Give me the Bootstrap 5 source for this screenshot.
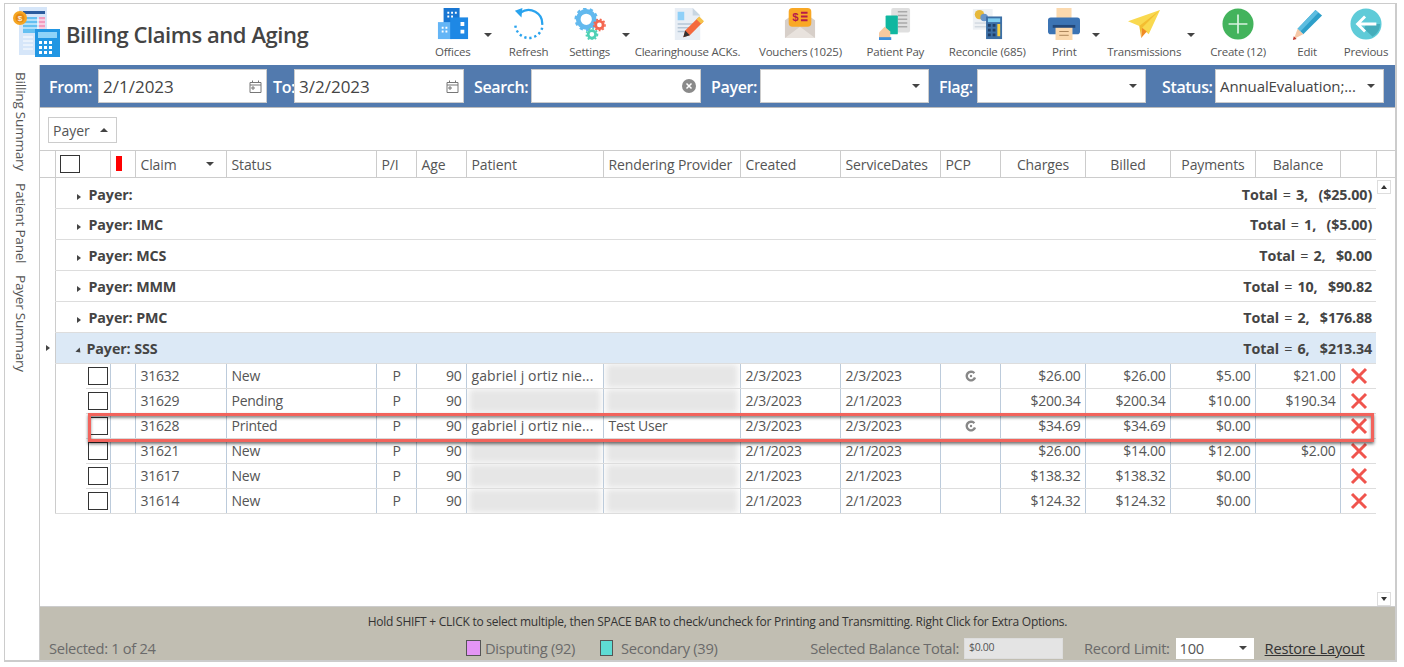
<!DOCTYPE html>
<html lang="en"><head><meta charset="utf-8"><title>Billing Claims and Aging</title>
<link href="https://cdn.jsdelivr.net/npm/bootstrap@5.3.0/dist/css/bootstrap.min.css" rel="stylesheet">
<style>
html,body{height:100%;background:#fff;overflow:hidden}
body{font-family:"Open Sans","Noto Sans",sans-serif;font-size:13.5px;color:#555}
.frame-x{margin:3px 0 0 4px;width:1393px;height:659px;border:1px solid #ccc;border-right-width:2px;border-bottom-width:2px}
.hdr-x{height:61px}
.logo-x{width:61px;padding-left:7px;padding-top:2px}
.ttl-x{font-size:22px;font-weight:600;color:#444;letter-spacing:-.42px;width:362px;padding-bottom:1px}
.tool-x{font-size:11.5px;color:#555;padding-top:4px;white-space:nowrap;letter-spacing:-.22px}
.tool-x svg{display:block;width:32px;height:32px;margin-bottom:3px}
.car-x{padding-top:29px}
.car-x i,.tri-d{display:block;width:0;height:0;border-left:4px solid transparent;border-right:4px solid transparent;border-top:4px solid #444}
.w12{width:12px}.w16{width:16px}.w18{width:18px}.w20{width:20px}
.w46{width:46px}.w50{width:50px}.w58{width:58px}.w60{width:60px}.w62{width:62px}.w76{width:76px}.w78{width:78px}.w108{width:108px}.w112{width:112px}.w114{width:114px}
.side-x{width:35px;border-right:1px solid #ccc;padding-top:7px;gap:12px;align-items:flex-start}
.side-x span{writing-mode:vertical-rl;font-size:13.5px;color:#555;margin-left:6px;white-space:nowrap;letter-spacing:-.2px;line-height:20px}
.main-x{width:1355px}
.filt-x{height:43px;background:#527aae;border-bottom:1px solid #bbb;padding:4px 0 0 9px;color:#fff;font-weight:600;font-size:16px}
.filt-x label{white-space:nowrap;letter-spacing:-.35px;margin-top:6px}
.fld-x{height:34px;width:169px;background:#fff;border:1px solid #ccc;color:#444;font-weight:400;padding:0 4px}
.fld-w{width:170px}
.l-from{width:49px}.l-to{width:21px;margin-left:6px}.l-search{width:57px;margin-left:10px}.l-payer{width:49px;margin-left:10px}.l-flag{width:38px;margin-left:10px}.l-status{width:53px;margin-left:16px}
.fld-x input{border:0;outline:0;padding:1px 0 0;width:100%;font-size:17px;color:#444;background:transparent;letter-spacing:0}
.st-v{font-size:15px;letter-spacing:-.1px}
.grp-x{height:43px;padding:9px 8px 0;border-bottom:1px solid #ccc}
.chip-x{width:69px;height:26px;border:1px solid #ccc;padding:0 5px 0 4px;font-size:14px}
.tri-u{width:0;height:0;border-left:4px solid transparent;border-right:4px solid transparent;border-bottom:4px solid #444;margin-right:3px}
.tbl-x{table-layout:fixed;width:1355px;margin:0;--bs-table-color:#555;--bs-table-border-color:#ddd;border-color:#ddd}
.tbl-x>*>tr>*{padding:0 4px 1px 5px;vertical-align:middle;white-space:nowrap;overflow:hidden;font-weight:400;box-shadow:none;border-width:0;font-size:14px;letter-spacing:-.25px}
.tbl-b{width:1336px}
.thd-x tr{height:26px}
.tbl-x .thd-x th{border-bottom:1px solid #ccc;border-right:1px solid #ccc;padding:1px 4px 0 5px;letter-spacing:-.12px}
.thd-x th.col-r{border-right-width:0!important}
.tbl-x .thd-x th.hd-nb{padding:0}
.tbd-x .gr-x{height:31px}
.tbl-x .tbd-x .gr-x td.g-c{border-bottom:1px solid #ddd;border-left:1px solid #ccc;font-weight:700;color:#444;padding:2px 4px 0 24px;letter-spacing:-.12px;font-size:14.3px}
.tot-x{word-spacing:1.6px}
.tbl-x .tbd-x .gr-f td.g-c{padding-top:4px}
.eq-x{font-weight:400}
.tbl-x .tbd-x .sel-x td.g-c{background:#dce9f6}
.tri-r{display:inline-block;width:0;height:0;border-top:3.5px solid transparent;border-bottom:3.5px solid transparent;border-left:4px solid #444}
.tri-s{display:inline-block;width:0;height:0;border-top:3.5px solid transparent;border-bottom:3.5px solid transparent;border-left:4px solid #444;transform:rotate(45deg);margin:0 6px 0 -3px}
.tri-m{display:block;margin-left:6px}
.g-a{display:inline-block;width:12px;margin-left:-3px}
.tbd-x .dr-x{height:25px}
.dr-x td{border-bottom:1px solid #ddd!important;border-right:1px solid #bccbdb!important}
.dr-x td.m-c{border-bottom-width:0!important;border-right:0!important}
.dr-x td.i-c{border-bottom-width:0!important;border-right:0!important;border-left:1px solid #ccc!important}
.dr-l td.i-c{border-bottom-width:1px!important}
.tbl-x>*>tr>td.c-c{padding:0 0 0 2px}
.tbl-x>*>tr.dr-x>td.l-c{border-right:0!important;padding:0 0 0 2px;text-align:center}
.tbl-x>*>tr>td.nm-x{letter-spacing:.12px;padding-right:0}
.box-x{display:block;width:20px;height:18px;border:1px solid #333;background:#fff}
.hbox-x{width:20px;height:18px;border:1px solid #333;margin-left:4px;display:block}
.flag-x{display:block;width:6px;height:15px;background:#f00;margin-left:5px}
.blur-x{display:block;height:24px;margin:0 -1px;background:#e6e6e6;filter:blur(3px)}
.tbl-x>*>tr>td.td-z{padding:0 3px}
.x-x{width:18px;height:18px;display:inline-block;vertical-align:middle;margin-top:-3px}
.c-x{width:12px;height:12px;display:block;margin:0 auto}
.scr-x{width:19px;padding:2px 4px 0 1px}
.sb-x{width:14px;height:14px;border:1px solid #ddd;background:#fff}
.sb-u{width:0;height:0;border-left:3px solid transparent;border-right:3px solid transparent;border-bottom:4px solid #333}
.sb-d{width:0;height:0;border-left:3px solid transparent;border-right:3px solid transparent;border-top:4px solid #333}
.wrap-x{min-height:0}
.hl-x{position:absolute;left:48px;top:348px;width:1286px;height:29px;border:3px solid #f2635c;box-shadow:0 2px 3px rgba(0,0,0,.55),inset 0 2px 3px rgba(0,0,0,.45);pointer-events:none}
.foot-x{height:54px;background:#c1beb2;padding:0 0 0 9px;border-top:1px solid #ccc}
.hint-x{font-size:12px;color:#333;height:30px;padding:6px 31px 0 0;letter-spacing:-.25px;margin-right:-22px}
.fr2-x{font-size:14.7px;color:#6a6a6a;letter-spacing:-.32px;white-space:nowrap}
.sw-x{width:15px;height:16px;border:1px solid #555;display:block}
.sw-p{background:#e495f5}.sw-t{background:#5edcd4;width:13px}
.sel-t{width:417px}.dis-x{width:134px}.sec-x{width:120px}.bal-x{width:343px}
.inp-x{width:99px;height:21px;background:#e4e4e4;border:1px solid #ddd;font-size:10.5px;padding:0 4px;color:#555}
.slt-x{width:78px;height:21px;background:#fff;padding:0 7px 0 4px;color:#555}
.rest-x{color:#333;margin-left:11px;text-decoration:underline;letter-spacing:-.2px}
.rec-x{margin-left:21px;margin-right:6px}
.bl-t{margin-right:5px;letter-spacing:-.36px}
</style></head>
<body>
<div class="frame-x d-flex flex-column">
 <div class="hdr-x d-flex">
  <div class="logo-x">
   <svg width="48" height="52" viewBox="0 0 48 52"><rect x="7" y="1" width="28" height="48" fill="#d6e6f9"/><rect x="11" y="5" width="22" height="3" fill="#2b5c9e"/><rect x="11" y="11" width="14" height="16" fill="#64c0f2"/><rect x="27" y="11" width="6" height="16" fill="#f29cc0"/><path d="M11 14h22M11 18h22M11 22h22M11 31h10M11 35h10M11 39h10M11 43h10" stroke="#fff"/><circle cx="8" cy="12" r="7" fill="#f5a623"/><circle cx="8" cy="12" r="4.5" fill="#e58a12"/><text x="8" y="15" font-size="8" fill="#fff" text-anchor="middle" font-family="Liberation Sans">$</text><rect x="23" y="23" width="25" height="28" fill="#2196e3"/><rect x="26" y="26" width="19" height="6" fill="#8fd3f8"/><path d="M27 35h3v3h-3zM32 35h3v3h-3zM37 35h3v3h-3zM27 40h3v3h-3zM32 40h3v3h-3zM37 40h3v3h-3zM27 45h3v3h-3zM32 45h3v3h-3zM37 45h3v3h-3z" fill="#fff"/></svg>
  </div>
  <div class="ttl-x d-flex align-items-center">Billing Claims and Aging</div>
  <div class="tool-x w50 d-flex flex-column align-items-center"><svg viewBox="0 0 34 34"><rect x="7" y="0" width="17" height="20" fill="#1976d2"/><rect x="1" y="15" width="15" height="18" fill="#64b5f6"/><rect x="14" y="10" width="19" height="23" fill="#1e88e5"/><path d="M11 4h2v2h-2zM15 4h2v2h-2zM19 4h2v2h-2zM11 8h2v2h-2zM15 8h2v2h-2zM5 20h2v2H5zM9 20h2v2H9zM5 24h2v2H5zM9 24h2v2H9z" fill="#fff"/><path d="M25 15h4v4h-4zM25 23h4v4h-4z" fill="#fff"/></svg>Offices</div>
  <div class="car-x w20 d-flex justify-content-center"><i></i></div>
  <div class="tool-x w62 d-flex flex-column align-items-center"><svg viewBox="0 0 34 34"><path d="M8 5A14.5 14.5 0 0 1 31 18" fill="none" stroke="#29a3ee" stroke-width="2.4"/><path d="M2 3l8-3-1 10z" fill="#29a3ee"/><path d="M31 21A14.5 14.5 0 0 1 2.5 18" fill="none" stroke="#29a3ee" stroke-width="2.6" stroke-dasharray="2.4 3"/></svg>Refresh</div>
  <div class="tool-x w60 d-flex flex-column align-items-center"><svg viewBox="0 0 34 34"><circle cx="13" cy="12" r="8.5" fill="none" stroke="#62b9ee" stroke-width="5"/><circle cx="13" cy="12" r="11" fill="none" stroke="#62b9ee" stroke-width="3" stroke-dasharray="3.5 3.4"/><circle cx="27" cy="18" r="4" fill="none" stroke="#f4664f" stroke-width="3"/><circle cx="27" cy="18" r="6" fill="none" stroke="#f4664f" stroke-width="1.6" stroke-dasharray="2 2"/><circle cx="19" cy="28" r="4" fill="none" stroke="#4fd1b5" stroke-width="3"/><circle cx="19" cy="28" r="6" fill="none" stroke="#4fd1b5" stroke-width="1.6" stroke-dasharray="2 2"/></svg>Settings</div>
  <div class="car-x w12 d-flex justify-content-center"><i></i></div>
  <div class="tool-x w112 d-flex flex-column align-items-center"><svg viewBox="0 0 34 34"><path d="M3 0h19l8 8v26H3z" fill="#e8eef5"/><path d="M22 0l8 8h-8z" fill="#c8d6e2"/><rect x="6" y="4" width="7" height="9" fill="#8fd0f8"/><path d="M6 17h18M6 21h14M6 25h10" stroke="#b5c6d6" stroke-width="1.5"/><path d="M12 31l2-7 14-14 5 5-14 14z" fill="#f4693e"/><path d="M26 12l3-3 5 5-3 3z" fill="#f5c24a"/><path d="M12 31l2-7 5 5z" fill="#333"/></svg>Clearinghouse ACKs.</div>
  <div class="tool-x w114 d-flex flex-column align-items-center"><svg viewBox="0 0 34 34"><path d="M1 13l16-11 16 11v19H1z" fill="#d7cfc9"/><rect x="5" y="0" width="24" height="20" rx="4" fill="#f9a825"/><text x="12" y="14" font-size="12" font-weight="700" fill="#b71c4a" text-anchor="middle" font-family="Liberation Sans">$</text><path d="M18 5h7M18 9h7M18 13h7" stroke="#b71c4a" stroke-width="2"/><path d="M1 32l16-12 16 12z" fill="#e8e2dd"/></svg>Vouchers (1025)</div>
  <div class="tool-x w76 d-flex flex-column align-items-center"><svg viewBox="0 0 34 34"><rect x="13" y="0" width="20" height="26" rx="2" fill="#dfdfdf"/><path d="M20 4h10M20 8h10M20 12h10M20 16h10M20 20h10" stroke="#a9a9a9" stroke-width="1.5"/><rect x="7" y="8" width="13" height="20" rx="1" fill="#10b7a0"/><path d="M0 34v-8l6-6 6 5v9z" fill="#f7c9a0"/><rect x="0" y="31" width="13" height="3" fill="#3d8fdc"/></svg>Patient Pay</div>
  <div class="tool-x w108 d-flex flex-column align-items-center"><svg viewBox="0 0 34 34"><rect x="2" y="1" width="21" height="22" fill="#eef1f4"/><circle cx="9" cy="7" r="5" fill="#e6b93c"/><circle cx="14" cy="10" r="4" fill="#6a95c8"/><path d="M4 16h12M4 20h12" stroke="#c3ccd5"/><rect x="16" y="9" width="17" height="24" fill="#3c6fa5"/><rect x="18" y="11" width="13" height="4" fill="#7fcdf0"/><path d="M18 17h3v3h-3zM23 17h3v3h-3zM18 22h3v3h-3zM23 22h3v3h-3zM18 27h3v3h-3zM23 27h3v3h-3z" fill="#1f3e66"/><rect x="28" y="17" width="3" height="13" fill="#f9d13f"/></svg>Reconcile (685)</div>
  <div class="tool-x w46 d-flex flex-column align-items-center"><svg viewBox="0 0 34 34"><rect x="9" y="0" width="16" height="12" fill="#fbd9ae"/><rect x="0" y="10" width="34" height="18" rx="3" fill="#3c74b4"/><rect x="8" y="20" width="18" height="14" fill="#fbd9ae"/><rect x="5" y="18" width="24" height="3" fill="#22487a"/><path d="M12 25h10M12 29h10" stroke="#a88156"/></svg>Print</div>
  <div class="car-x w18 d-flex justify-content-center"><i></i></div>
  <div class="tool-x w78 d-flex flex-column align-items-center"><svg viewBox="0 0 34 34"><path d="M0 14L34 2 22 28 12 19z" fill="#f9d94f"/><path d="M12 19l22-17-19 19-1 11z" fill="#f3bd31"/><path d="M14 32l1-11 5 4z" fill="#f08a24"/></svg>Transmissions</div>
  <div class="car-x w16 d-flex justify-content-center"><i></i></div>
  <div class="tool-x w78 d-flex flex-column align-items-center"><svg viewBox="0 0 34 34"><circle cx="17" cy="17" r="16.5" fill="#43b35c"/><path d="M17 7v20M7 17h20" stroke="#d9f2df" stroke-width="1.8"/></svg>Create (12)</div>
  <div class="tool-x w60 d-flex flex-column align-items-center"><svg viewBox="0 0 34 34"><path d="M7 22L26 2l7 6-20 20z" fill="#2d9fc9"/><path d="M7 22L26 2l3 3L10 25z" fill="#5dbde0"/><path d="M7 22l6 6-10 5z" fill="#f6c9a8"/><path d="M3 30l-1 4 4-1z" fill="#c0392b"/></svg>Edit</div>
  <div class="tool-x w58 d-flex flex-column align-items-center"><svg viewBox="0 0 34 34"><circle cx="17" cy="17" r="16.5" fill="#5fcbd8"/><path d="M17 17h15a16 16 0 0 1-8 13.5L15 22z" fill="#45adbb"/><path d="M16 9l-8 8 8 8M9 17h19" fill="none" stroke="#fff" stroke-width="3"/></svg>Previous</div>
 </div>
 <div class="d-flex flex-grow-1 wrap-x">
  <div class="side-x d-flex flex-column"><span>Billing Summary</span><span>Patient Panel</span><span>Payer Summary</span></div>
  <div class="main-x d-flex flex-column position-relative">
   <div class="filt-x d-flex">
    <label class="l-from">From:</label>
    <div class="fld-x d-flex align-items-center"><input class="form-control-plaintext" value="2/1/2023" aria-label="From"><svg width="13" height="13" viewBox="0 0 13 13" class="flex-shrink-0"><path d="M1 2.5h11v10H1zM1 5h11M3.500 .5v2M9.500 .5v2M3 7h2v2H3z" fill="none" stroke="#777"/></svg></div>
    <label class="l-to">To:</label>
    <div class="fld-x fld-w d-flex align-items-center"><input class="form-control-plaintext" value="3/2/2023" aria-label="To"><svg width="13" height="13" viewBox="0 0 13 13" class="flex-shrink-0"><path d="M1 2.5h11v10H1zM1 5h11M3.500 .5v2M9.500 .5v2M3 7h2v2H3z" fill="none" stroke="#777"/></svg></div>
    <label class="l-search">Search:</label>
    <div class="fld-x fld-w d-flex align-items-center justify-content-end"><svg width="14" height="14" viewBox="0 0 14 14"><circle cx="7" cy="7" r="7" fill="#8a8a8a"/><path d="M4.500 4.500l5 5M9.500 4.500l-5 5" stroke="#fff" stroke-width="1.500"/></svg></div>
    <label class="l-payer">Payer:</label>
    <div class="fld-x d-flex align-items-center justify-content-end"><span class="tri-d me-1"></span></div>
    <label class="l-flag">Flag:</label>
    <div class="fld-x d-flex align-items-center justify-content-end"><span class="tri-d me-1"></span></div>
    <label class="l-status">Status:</label>
    <div class="fld-x d-flex align-items-center justify-content-between"><span class="st-v">AnnualEvaluation;...</span><span class="tri-d me-1"></span></div>
   </div>
   <div class="grp-x"><div class="chip-x d-flex align-items-center justify-content-between">Payer<span class="tri-u"></span></div></div>
   <table class="table tbl-x"><colgroup><col style="width:15px"><col style="width:31px"><col style="width:24px"><col style="width:25px"><col style="width:91px"><col style="width:150px"><col style="width:40px"><col style="width:50px"><col style="width:137px"><col style="width:137px"><col style="width:100px"><col style="width:100px"><col style="width:60px"><col style="width:85px"><col style="width:85px"><col style="width:85px"><col style="width:85px"><col style="width:36px"><col></colgroup>
    <thead class="thd-x"><tr><th></th><th colspan="2" class="hd-nb"><span class="hbox-x"></span></th><th class="hd-nb"><span class="flag-x"></span></th><th><div class="d-flex justify-content-between align-items-center pe-2">Claim<span class="tri-d"></span></div></th><th>Status</th><th>P/I</th><th>Age</th><th>Patient</th><th>Rendering Provider</th><th>Created</th><th>ServiceDates</th><th>PCP</th><th class="text-center">Charges</th><th class="text-center">Billed</th><th class="text-center">Payments</th><th class="text-center">Balance</th><th></th><th class="col-r"></th></tr></thead>
   </table>
   <div class="d-flex flex-grow-1 wrap-x">
    <div>
    <table class="table tbl-x tbl-b"><colgroup><col style="width:15px"><col style="width:31px"><col style="width:24px"><col style="width:25px"><col style="width:91px"><col style="width:150px"><col style="width:40px"><col style="width:50px"><col style="width:137px"><col style="width:137px"><col style="width:100px"><col style="width:100px"><col style="width:60px"><col style="width:85px"><col style="width:85px"><col style="width:85px"><col style="width:85px"><col style="width:36px"></colgroup>
     <tbody class="tbd-x">
      <tr class="gr-x gr-f"><td class="m-c"></td><td colspan="17" class="g-c"><div class="d-flex justify-content-between"><span><i class="tri-r g-a"></i>Payer:</span><span class="tot-x">Total <span class="eq-x">=</span> 3,&nbsp; ($25.00)</span></div></td></tr>
      <tr class="gr-x"><td class="m-c"></td><td colspan="17" class="g-c"><div class="d-flex justify-content-between"><span><i class="tri-r g-a"></i>Payer: IMC</span><span class="tot-x">Total <span class="eq-x">=</span> 1,&nbsp; ($5.00)</span></div></td></tr>
      <tr class="gr-x"><td class="m-c"></td><td colspan="17" class="g-c"><div class="d-flex justify-content-between"><span><i class="tri-r g-a"></i>Payer: MCS</span><span class="tot-x">Total <span class="eq-x">=</span> 2,&nbsp; $0.00</span></div></td></tr>
      <tr class="gr-x"><td class="m-c"></td><td colspan="17" class="g-c"><div class="d-flex justify-content-between"><span><i class="tri-r g-a"></i>Payer: MMM</span><span class="tot-x">Total <span class="eq-x">=</span> 10,&nbsp; $90.82</span></div></td></tr>
      <tr class="gr-x"><td class="m-c"></td><td colspan="17" class="g-c"><div class="d-flex justify-content-between"><span><i class="tri-r g-a"></i>Payer: PMC</span><span class="tot-x">Total <span class="eq-x">=</span> 2,&nbsp; $176.88</span></div></td></tr>
      <tr class="gr-x sel-x"><td class="p-0"><i class="tri-r tri-m"></i></td><td colspan="17" class="g-c"><div class="d-flex justify-content-between"><span><i class="tri-s"></i>Payer: SSS</span><span class="tot-x">Total <span class="eq-x">=</span> 6,&nbsp; $213.34</span></div></td></tr>
      <tr class="dr-x"><td class="m-c"></td><td class="i-c"></td><td class="c-c"><span class="box-x"></span></td><td></td><td>31632</td><td>New</td><td class="text-center">P</td><td class="text-end">90</td><td class="nm-x">gabriel j ortiz nie...</td><td class="td-z"><span class="blur-x"></span></td><td>2/3/2023</td><td>2/3/2023</td><td><svg class="c-x" viewBox="0 0 12 12"><circle cx="6" cy="6" r="4.300" fill="none" stroke="#888" stroke-width="2.400" stroke-dasharray="22 5" transform="rotate(20 6 6)"/><circle cx="6" cy="6" r="1.200" fill="#888"/></svg></td><td class="text-end">$26.00</td><td class="text-end">$26.00</td><td class="text-end">$5.00</td><td class="text-end">$21.00</td><td class="l-c"><svg class="x-x" viewBox="0 0 18 18"><path d="M2 2l14 14M16 2L2 16" stroke="#f0544d" stroke-width="3"/></svg></td></tr>
      <tr class="dr-x"><td class="m-c"></td><td class="i-c"></td><td class="c-c"><span class="box-x"></span></td><td></td><td>31629</td><td>Pending</td><td class="text-center">P</td><td class="text-end">90</td><td class="td-z"><span class="blur-x"></span></td><td class="td-z"><span class="blur-x"></span></td><td>2/3/2023</td><td>2/1/2023</td><td></td><td class="text-end">$200.34</td><td class="text-end">$200.34</td><td class="text-end">$10.00</td><td class="text-end">$190.34</td><td class="l-c"><svg class="x-x" viewBox="0 0 18 18"><path d="M2 2l14 14M16 2L2 16" stroke="#f0544d" stroke-width="3"/></svg></td></tr>
      <tr class="dr-x"><td class="m-c"></td><td class="i-c"></td><td class="c-c"><span class="box-x"></span></td><td></td><td>31628</td><td>Printed</td><td class="text-center">P</td><td class="text-end">90</td><td class="nm-x">gabriel j ortiz nie...</td><td>Test User</td><td>2/3/2023</td><td>2/3/2023</td><td><svg class="c-x" viewBox="0 0 12 12"><circle cx="6" cy="6" r="4.300" fill="none" stroke="#888" stroke-width="2.400" stroke-dasharray="22 5" transform="rotate(20 6 6)"/><circle cx="6" cy="6" r="1.200" fill="#888"/></svg></td><td class="text-end">$34.69</td><td class="text-end">$34.69</td><td class="text-end">$0.00</td><td></td><td class="l-c"><svg class="x-x" viewBox="0 0 18 18"><path d="M2 2l14 14M16 2L2 16" stroke="#f0544d" stroke-width="3"/></svg></td></tr>
      <tr class="dr-x"><td class="m-c"></td><td class="i-c"></td><td class="c-c"><span class="box-x"></span></td><td></td><td>31621</td><td>New</td><td class="text-center">P</td><td class="text-end">90</td><td class="td-z"><span class="blur-x"></span></td><td class="td-z"><span class="blur-x"></span></td><td>2/1/2023</td><td>2/1/2023</td><td></td><td class="text-end">$26.00</td><td class="text-end">$14.00</td><td class="text-end">$12.00</td><td class="text-end">$2.00</td><td class="l-c"><svg class="x-x" viewBox="0 0 18 18"><path d="M2 2l14 14M16 2L2 16" stroke="#f0544d" stroke-width="3"/></svg></td></tr>
      <tr class="dr-x"><td class="m-c"></td><td class="i-c"></td><td class="c-c"><span class="box-x"></span></td><td></td><td>31617</td><td>New</td><td class="text-center">P</td><td class="text-end">90</td><td class="td-z"><span class="blur-x"></span></td><td class="td-z"><span class="blur-x"></span></td><td>2/1/2023</td><td>2/1/2023</td><td></td><td class="text-end">$138.32</td><td class="text-end">$138.32</td><td class="text-end">$0.00</td><td></td><td class="l-c"><svg class="x-x" viewBox="0 0 18 18"><path d="M2 2l14 14M16 2L2 16" stroke="#f0544d" stroke-width="3"/></svg></td></tr>
      <tr class="dr-x dr-l"><td class="m-c"></td><td class="i-c"></td><td class="c-c"><span class="box-x"></span></td><td></td><td>31614</td><td>New</td><td class="text-center">P</td><td class="text-end">90</td><td class="td-z"><span class="blur-x"></span></td><td class="td-z"><span class="blur-x"></span></td><td>2/1/2023</td><td>2/1/2023</td><td></td><td class="text-end">$124.32</td><td class="text-end">$124.32</td><td class="text-end">$0.00</td><td></td><td class="l-c"><svg class="x-x" viewBox="0 0 18 18"><path d="M2 2l14 14M16 2L2 16" stroke="#f0544d" stroke-width="3"/></svg></td></tr>
     </tbody>
    </table>
    </div>
    <div class="scr-x d-flex flex-column justify-content-between">
     <div class="sb-x d-flex align-items-center justify-content-center"><span class="sb-u"></span></div>
     <div class="sb-x d-flex align-items-center justify-content-center"><span class="sb-d"></span></div>
    </div>
   </div>
   <div class="hl-x"></div>
   <div class="foot-x">
    <div class="hint-x text-center">Hold SHIFT + CLICK to select multiple, then SPACE BAR to check/uncheck for Printing and Transmitting. Right Click for Extra Options.</div>
    <div class="fr2-x d-flex align-items-center">
     <div class="sel-t">Selected: 1 of 24</div>
     <div class="dis-x d-flex align-items-center gap-1"><span class="sw-x sw-p"></span>Disputing (92)</div>
     <div class="sec-x d-flex align-items-center gap-2"><span class="sw-x sw-t"></span>Secondary (39)</div>
     <div class="bal-x d-flex align-items-center justify-content-end"><span class="bl-t">Selected Balance Total:</span><div class="inp-x d-flex align-items-center">$0.00</div></div>
     <div class="rec-x">Record Limit:</div>
     <div class="slt-x d-flex align-items-center justify-content-between">100<span class="tri-d"></span></div>
     <div class="rest-x">Restore Layout</div>
    </div>
   </div>
  </div>
 </div>
</div>
<script src="https://cdn.jsdelivr.net/npm/bootstrap@5.3.0/dist/js/bootstrap.bundle.min.js"></script>
</body></html>
